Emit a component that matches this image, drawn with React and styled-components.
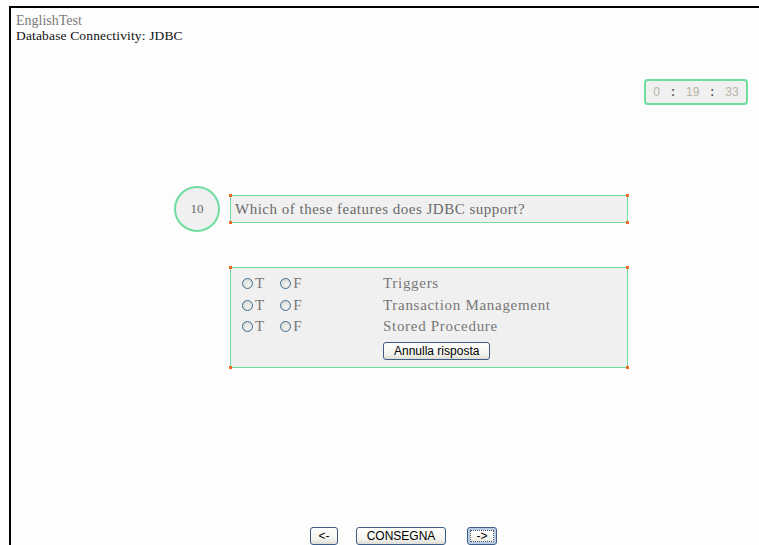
import React from "react";
import styled, { createGlobalStyle } from "styled-components";

const Global = createGlobalStyle`
  html, body { margin: 0; padding: 0; background: #fdfdfd; overflow: hidden; }
  body { font-family: "Liberation Serif", serif; }
`;

const Frame = styled.div`
  margin: 6px 0 0 9px;
  height: 539px;
  box-sizing: border-box;
  border-top: 2px solid #000;
  border-left: 2px solid #000;
  display: flex;
  flex-direction: column;
`;

const Header = styled.header`
  padding: 5px 0 0 5px;
  font-size: 14px;
  line-height: 15px;
`;

const Title = styled.div`
  color: #7a7a7a;
`;

const Subtitle = styled.div`
  color: #111;
  font-size: 13.5px;
  letter-spacing: 0.15px;
`;

const TimerRow = styled.div`
  display: flex;
  justify-content: flex-end;
  padding-right: 11px;
  margin-top: 36px;
`;

const Timer = styled.div`
  width: 100px;
  height: 22px;
  border: 2px solid #6fdca0;
  border-radius: 4px;
  background: #f0f0f0;
  display: flex;
  align-items: center;
  justify-content: center;
  gap: 11px;
  font-family: "Liberation Sans", sans-serif;
  font-size: 12px;
  color: #b7b3a4;
`;

const Colon = styled.span`
  color: #555;
  font-weight: bold;
`;

const QuestionRow = styled.div`
  display: flex;
  align-items: center;
  margin: 81px 0 0 163px;
  gap: 10px;
`;

const Badge = styled.div`
  width: 42px;
  height: 42px;
  border: 2px solid #6fdca0;
  border-radius: 50%;
  background: #f0f0f0;
  display: flex;
  align-items: center;
  justify-content: center;
  font-size: 13px;
  color: #666;
`;

const Boxed = styled.div`
  position: relative;
  width: 398px;
  border: 1.5px solid #6fdca0;
  background: #f0f0f0;
  box-sizing: border-box;
`;

const Corner = styled.i`
  position: absolute;
  width: 3px;
  height: 3px;
  background: #f26a2a;
  ${(p) => (p.$top ? "top: -2px;" : "bottom: -2px;")}
  ${(p) => (p.$left ? "left: -2px;" : "right: -2px;")}
`;

const Corners = () => (
  <>
    <Corner $top $left />
    <Corner $top />
    <Corner $left />
    <Corner />
  </>
);

const QuestionBox = styled(Boxed)`
  height: 28px;
  padding-left: 4px;
  display: flex;
  align-items: center;
  font-size: 15px;
  letter-spacing: 0.5px;
  color: #6a6a6a;
`;

const AnswersBox = styled(Boxed)`
  margin: 35px 0 0 219px;
  height: 101px;
  padding: 5px 0 0 11px;
`;

const AnswerRow = styled.div`
  display: grid;
  grid-template-columns: 141px 1fr;
  height: 21.5px;
  align-items: center;
`;

const Choices = styled.div`
  display: flex;
  align-items: center;
  font-size: 15px;
  color: #777;
`;

const Choice = styled.label`
  display: flex;
  align-items: center;
  gap: 2px;
  margin-right: 16px;
`;

const Radio = styled.span`
  width: 9px;
  height: 9px;
  border: 1px solid #3f6e93;
  border-radius: 50%;
  background: radial-gradient(circle at 60% 65%, #f4f4f4 0, #dcdcd6 70%);
`;

const AnswerText = styled.div`
  font-size: 15px;
  letter-spacing: 0.7px;
  color: #777;
`;

const Button = styled.button`
  font-family: "Liberation Sans", sans-serif;
  font-size: 12px;
  color: #000;
  height: 18px;
  padding: 0 10px;
  border: 1px solid #3d5d87;
  border-radius: 3px;
  background: linear-gradient(#ffffff, #f4f4ef 70%, #dcdcd4);
  line-height: 14px;
  box-sizing: border-box;
  ${(p) => p.$focused && "outline: 1px dotted #555; outline-offset: -4px; box-shadow: inset 0 0 0 2px #b6cbe8;"}
`;

const ResetRow = styled.div`
  margin: 3px 0 0 141px;
`;

const Nav = styled.nav`
  margin: auto 0 0 299px;
  display: flex;
  gap: 18px;
`;

const NavButton = styled(Button)`
  width: ${(p) => p.$w}px;
  padding: 0;
  margin-left: ${(p) => p.$shift || 0}px;
`;

const answers = ["Triggers", "Transaction Management", "Stored Procedure"];

export default function App() {
  return (
    <>
      <Global />
      <Frame>
        <Header>
          <Title>EnglishTest</Title>
          <Subtitle>Database Connectivity: JDBC</Subtitle>
        </Header>
        <TimerRow>
          <Timer>
            <span>0</span>
            <Colon>:</Colon>
            <span>19</span>
            <Colon>:</Colon>
            <span>33</span>
          </Timer>
        </TimerRow>
        <QuestionRow>
          <Badge>10</Badge>
          <QuestionBox>
            <Corners />
            Which of these features does JDBC support?
          </QuestionBox>
        </QuestionRow>
        <AnswersBox>
          <Corners />
          {answers.map((a) => (
            <AnswerRow key={a}>
              <Choices>
                <Choice>
                  <Radio />T
                </Choice>
                <Choice>
                  <Radio />F
                </Choice>
              </Choices>
              <AnswerText>{a}</AnswerText>
            </AnswerRow>
          ))}
          <ResetRow>
            <Button>Annulla risposta</Button>
          </ResetRow>
        </AnswersBox>
        <Nav>
          <NavButton $w={28}>&lt;-</NavButton>
          <NavButton $w={90}>CONSEGNA</NavButton>
          <NavButton $w={30} $shift={3} $focused>-&gt;</NavButton>
        </Nav>
      </Frame>
    </>
  );
}
